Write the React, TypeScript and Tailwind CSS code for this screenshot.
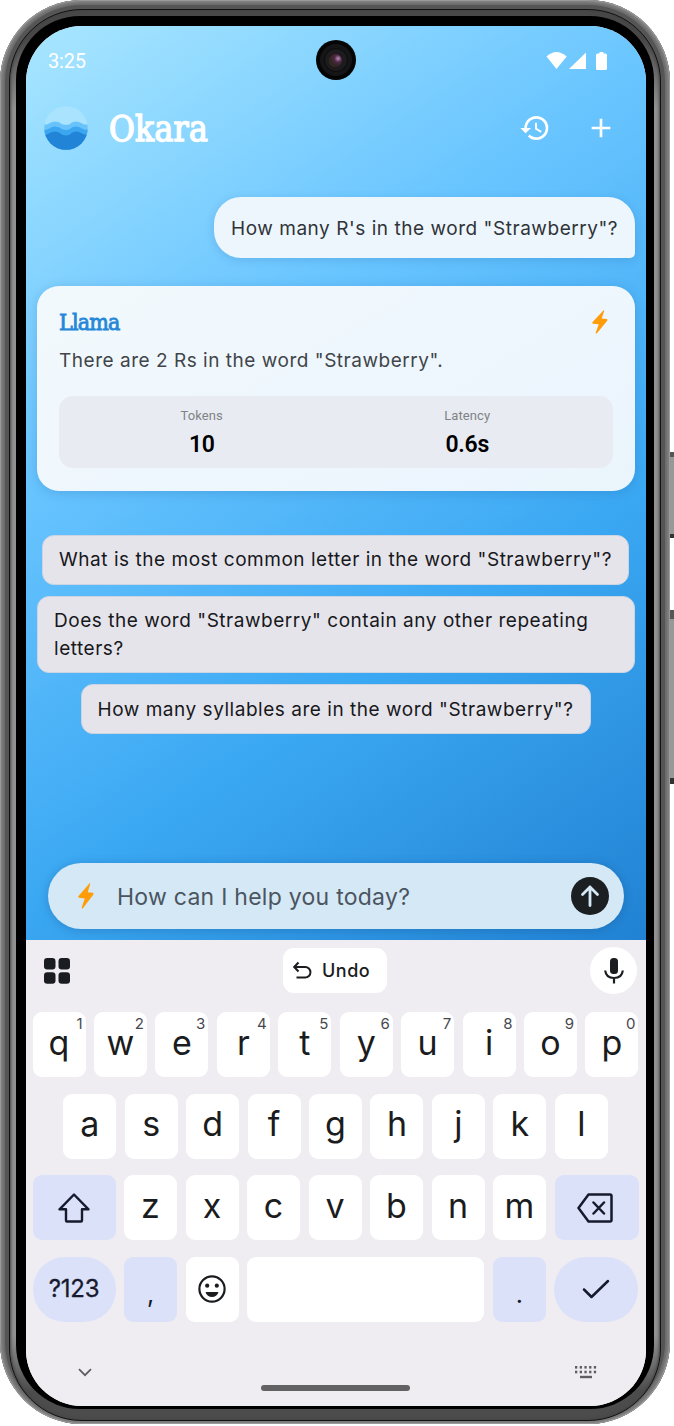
import React from "react";
import { MdHistory, MdAdd } from "react-icons/md";

function Bolt({ className }: { className?: string }) {
  return (
    <svg viewBox="0 0 16 24" className={className} fill="#ff9c07" preserveAspectRatio="none">
      <path d="M11.4.5.4 12.3q-.5 1 .6 1.400l5.800.5L3.700 22.600q0 1.300 1.200.7L15.400 10.600q.4-1.100-.6-1.500L9.700 8.600 12.200.900Q12.200-.1 11.400.5Z" />
    </svg>
  );
}

function Logo() {
  return (
    <svg viewBox="0 0 44 44" className="size-11 shrink-0">
      <defs>
        <clipPath id="logo-disc">
          <circle cx="22" cy="22" r="21.800" />
        </clipPath>
      </defs>
      <g clipPath="url(#logo-disc)">
        <rect width="44" height="44" fill="#a9e3fd" />
        <path d="M0 18C4 20 6 15.500 11 15.500S17 19 22 19 27 15.500 32 15.500 39 20 44 18V44H0Z" fill="#69c3fb" />
        <path d="M0 23.500C4 25 6 20.500 11 20.500S17 24 22 24 27 20.500 32 20.500 39 25 44 23.500V44H0Z" fill="#3ca6f0" />
        <path d="M0 28.500C4 29.500 6 25.500 11 25.500S17 29.500 22 29.500 27 25.500 32 25.500 39 29.500 44 28.500V44H0Z" fill="#2284d7" />
      </g>
    </svg>
  );
}

function StatusBar() {
  return (
    <div className="flex h-[68px] items-center justify-between pl-[22px] pr-[38px] pt-px text-white">
      <span className="font-['Roboto',sans-serif] text-[20px] leading-none tracking-[-0.2px]">3:25</span>
      <svg viewBox="0 0 62 20" className="h-5 w-[62px]" fill="currentColor">
        <path d="M.5 5.500Q10.500-3.500 20.700 5.500L10.500 18Z" />
        <path d="M40 1.500V18H23Z" />
        <path d="M53.500 1h4v1.500h2q1.500 0 1.500 1.500v13.500q0 1.500-1.500 1.500h-8q-1.500 0-1.500-1.500V4q0-1.500 1.500-1.500h2Z" />
      </svg>
    </div>
  );
}

function Camera() {
  return (
    <div className="absolute left-[289.500px] top-[14px] flex size-10 items-center justify-center rounded-full bg-[#050505]">
      <div className="flex size-8 items-center justify-center rounded-full bg-[#151416]">
        <div className="flex size-[24px] items-center justify-center rounded-full border border-[#0b0b0c] bg-[#1d1b1e]">
          <div className="size-[13px] rounded-full bg-[radial-gradient(circle_at_70%_35%,#b98bb5_0%,#4c2745_30%,#2f241b_65%,#584c48_100%)]" />
        </div>
      </div>
    </div>
  );
}

function Header() {
  return (
    <header className="flex h-[68px] items-center pl-[18px] pr-[29px]">
      <Logo />
      <h1 className="ml-[21px] pt-[3px] font-['DejaVu_Serif_Condensed','DejaVu_Serif',serif] text-[35px] leading-none tracking-[0.3px] text-white [-webkit-text-stroke:1.400px_white]">
        Okara
      </h1>
      <MdHistory className="ml-auto size-8 text-white" />
      <MdAdd className="ml-[34px] size-8 text-white" />
    </header>
  );
}

function Stat({ label, value }: { label: string; value: string }) {
  return (
    <div className="flex flex-1 flex-col items-center font-['Roboto',sans-serif]">
      <span className="text-[13px] leading-[15px] tracking-[0.1px] text-[#808386]">{label}</span>
      <span className="mt-[8px] text-[23px] font-semibold leading-[27px] tracking-[-0.3px] text-black">{value}</span>
    </div>
  );
}

function Chat() {
  return (
    <main className="flex flex-col items-center px-[11px] pt-[35px] font-['Inter',sans-serif] text-[19px] leading-[28px]">
      <div className="flex h-[61px] w-[421px] items-center self-end whitespace-nowrap rounded-[27px] rounded-br-[5px] bg-[#eef6fd] pl-[17px] pt-[2px] tracking-[0.540px] text-[#303438] shadow-[0_2px_10px_rgba(20,80,140,0.18)]">
        How many R's in the word "Strawberry"?
      </div>
      <section className="mt-[28px] h-[205px] w-[598px] rounded-[22px] bg-[linear-gradient(150deg,#f1f9fc,#eff7fe_45%,#ecf5fd_85%,#eaf6fb)] px-[22px] pt-[20px] shadow-[0_2px_12px_rgba(20,80,140,0.22)]">
        <div className="flex h-[32px] items-center justify-between pr-[5px]">
          <h2 className="font-['DejaVu_Serif_Condensed','DejaVu_Serif',serif] text-[23px] leading-none tracking-[-0.800px] text-[#2487d8] [-webkit-text-stroke:0.8px_#2487d8]">
            Llama
          </h2>
          <Bolt className="h-6 w-4" />
        </div>
        <p className="mt-[9px] tracking-[0.520px] text-[#414549]">There are 2 Rs in the word "Strawberry".</p>
        <div className="mt-[21px] flex h-[72px] rounded-[14px] bg-[#e8ebf1] pl-[10px] pr-[13px] pt-3">
          <Stat label="Tokens" value="10" />
          <Stat label="Latency" value="0.6s" />
        </div>
      </section>
      <div className="mt-[44px] flex w-full flex-col items-center gap-[11px] tracking-[0.530px] text-[#17181b]">
        <div className="mr-px flex h-[50px] w-[587px] items-center justify-center whitespace-nowrap rounded-[12px] border border-[#ccd4e2] bg-[#e6e4eb]">
          What is the most common letter in the word "Strawberry"?
        </div>
        <div className="flex h-[77px] w-[598px] items-center rounded-[12px] border border-[#ccd4e2] bg-[#e6e4eb] pl-[16px] pr-5">
          Does the word "Strawberry" contain any other repeating letters?
        </div>
        <div className="mr-px flex h-[50px] w-[510px] items-center justify-center whitespace-nowrap rounded-[12px] border border-[#ccd4e2] bg-[#e6e4eb] pt-px">
          How many syllables are in the word "Strawberry"?
        </div>
      </div>
    </main>
  );
}

function Composer() {
  return (
    <div className="mb-[11px] ml-[22px] mr-[22px] mt-auto flex h-[66px] items-center rounded-full bg-[#d5e8f6] pl-[30px] pr-[15px] shadow-[0_1px_10px_rgba(10,50,100,0.25)]">
      <Bolt className="h-[26px] w-4" />
      <span className="ml-[23px] pt-[2px] font-['Inter',sans-serif] text-[23px] leading-none tracking-[0.260px] text-[#4b5560]">How can I help you today?</span>
      <div className="ml-auto flex size-[38px] items-center justify-center rounded-full bg-[#1b1f22] text-[#d5e8f6]">
        <svg viewBox="0 0 24 24" className="size-6" fill="none" stroke="currentColor" strokeWidth="2.800" strokeLinecap="round" strokeLinejoin="round">
          <path d="M12 21.500V3M4.500 10.500 12 3l7.500 7.500" />
        </svg>
      </div>
    </div>
  );
}

function Key({ label, hint, tinted }: { label: string; hint?: string; tinted?: boolean }) {
  return (
    <div
      className={
        tinted
          ? "relative flex h-[65px] w-[53px] items-end justify-center rounded-[9px] bg-[#dce1fa] pb-[14px] text-[25px] leading-[28px] text-[#161a2c]"
          : "relative flex h-[65px] w-[53px] items-center justify-center rounded-[9px] bg-white pb-1 text-[34px] leading-none text-[#1b1c20]"
      }
    >
      {label}
      {hint && <span className="absolute right-[3px] top-[4px] text-[15px] leading-[16px] text-[#46484f]">{hint}</span>}
    </div>
  );
}

const topRow = [..."qwertyuiop"];
const hints = [..."1234567890"];
const homeRow = [..."asdfghjkl"];
const bottomRow = [..."zxcvbnm"];

function Keyboard() {
  return (
    <div className="flex h-[466px] shrink-0 flex-col bg-[#efedf2] pl-[6.500px] pr-[7.500px] font-['Inter',sans-serif]">
      <div className="flex h-[61px] items-center justify-between pl-[11.500px] pr-[1.500px]">
        <svg viewBox="0 0 26 26" className="size-[26px]" fill="#1b1c21">
          <rect width="11.500" height="11.500" rx="3.200" />
          <rect x="14.500" width="11.500" height="11.500" rx="3.200" />
          <rect y="14.300" width="11.500" height="11.500" rx="3.200" />
          <rect x="14.500" y="14.300" width="11.500" height="11.500" rx="3.200" />
        </svg>
        <div className="ml-[10px] flex h-[45px] w-[104px] items-center rounded-[11px] bg-white pl-[9px] text-[#1b1c20]">
          <svg viewBox="0 0 20 20" className="size-5 shrink-0" fill="none" stroke="currentColor" strokeWidth="2">
            <path d="M6.500 1.500 2.200 6l4.300 4.500M2.700 6h10.500a5.200 5.200 0 0 1 0 10.500H4.500" />
          </svg>
          <span className="ml-[10px] text-[18px] font-medium leading-none tracking-[0.5px]">Undo</span>
        </div>
        <div className="flex size-[47px] items-center justify-center rounded-full bg-white">
          <svg viewBox="0 0 22 28" className="h-7 w-[22px]" fill="none" stroke="#1b1c20" strokeWidth="2.200">
            <rect x="7" y="1" width="8" height="16" rx="3.500" fill="#1b1c20" stroke="none" />
            <path d="M2.200 13.500c.5 5 4 7.500 8.800 7.500s8.300-2.500 8.800-7.500M11 21v5.500" />
          </svg>
        </div>
      </div>
      <div className="mt-[11px] flex justify-between">
        {topRow.map((k, i) => (
          <Key key={k} label={k} hint={hints[i]} />
        ))}
      </div>
      <div className="mt-[16.500px] flex justify-between px-[30.700px]">
        {homeRow.map((k) => (
          <Key key={k} label={k} />
        ))}
      </div>
      <div className="mt-[16.500px] flex justify-between">
        <div className="flex h-[65px] w-[83px] items-center justify-center rounded-[9px] bg-[#dce1fa]">
          <svg viewBox="0 0 32 30" className="h-[30px] w-8" fill="none" stroke="#161a2c" strokeWidth="2.400" strokeLinejoin="round">
            <path d="M16 1.500 1.500 16.300H8v11.200q0 1 1 1h14q1 0 1-1V16.300h6.500Z" />
          </svg>
        </div>
        {bottomRow.map((k) => (
          <Key key={k} label={k} />
        ))}
        <div className="flex h-[65px] w-[84px] items-center justify-center rounded-[9px] bg-[#dce1fa] pr-1">
          <svg viewBox="0 0 36 30" className="h-[30px] w-9" fill="none" stroke="#161a2c" strokeWidth="2.500" strokeLinejoin="round" strokeLinecap="round">
            <path d="M11.500 1.500h21.500q1.500 0 1.500 1.500v24q0 1.500-1.500 1.500H11.500L1.500 15ZM16.500 9.500 27 20.500M27 9.500 16.500 20.500" />
          </svg>
        </div>
      </div>
      <div className="mt-[16.500px] flex justify-between">
        <div className="flex h-[65px] w-[83px] items-center justify-center rounded-[32px] bg-[#dce1fa] text-[24px] tracking-[-0.200px] text-[#161a2c] [-webkit-text-stroke:0.3px_#161a2c]">?123</div>
        <Key label="," tinted />
        <div className="flex h-[65px] w-[53px] items-center justify-center rounded-[9px] bg-white">
          <svg viewBox="0 0 28 28" className="size-7" fill="#1b1c20">
            <circle cx="14" cy="14" r="12.600" fill="none" stroke="#1b1c20" strokeWidth="2.200" />
            <circle cx="9.200" cy="10.700" r="2.100" />
            <circle cx="18.800" cy="10.700" r="2.100" />
            <path d="M7.500 17h13c-1 3.200-3.500 5-6.500 5s-5.500-1.800-6.500-5Z" />
          </svg>
        </div>
        <div className="h-[65px] w-[237px] rounded-[9px] bg-white" />
        <Key label="." tinted />
        <div className="flex h-[65px] w-[84px] items-center justify-center rounded-[32px] bg-[#dce1fa]">
          <svg viewBox="0 0 28 20" className="h-5 w-7" fill="none" stroke="#161a2c" strokeWidth="2.500" strokeLinecap="round" strokeLinejoin="round">
            <path d="m2 10.500 7.500 7.500L26 2" />
          </svg>
        </div>
      </div>
      <div className="mt-[39px] flex items-start justify-between pl-[45.500px] pr-[41.500px]">
        <svg viewBox="0 0 14 9" className="mt-[7px] h-[9px] w-[14px]" fill="none" stroke="#5e5e62" strokeWidth="1.800">
          <path d="m1 1.200 6 6 6-6" />
        </svg>
        <div className="ml-[4px] mt-[24px] h-[6px] w-[149px] rounded-full bg-[#626164]" />
        <svg viewBox="0 0 22 13" className="mt-[5px] h-[13px] w-[22px]" fill="#5e5e62">
          {[0, 4.7, 9.4, 14.1, 18.8].map((x) => (
            <React.Fragment key={x}>
              <rect x={x} y="0" width="2.300" height="2.600" />
              <rect x={x} y="4.700" width="2.300" height="2.600" />
            </React.Fragment>
          ))}
          <rect x="5" y="9.800" width="12" height="2.400" />
        </svg>
      </div>
    </div>
  );
}

export default function App() {
  return (
    <div className="relative h-[1426px] w-[674px] overflow-hidden bg-white">
      <div className="absolute left-[669px] top-[452px] h-[86px] w-[8px] border-b-4 border-t-[5px] border-b-[#333] border-t-[#555] bg-[#989898]" />
      <div className="absolute left-[669px] top-[610px] h-[174px] w-[8px] border-b-[6px] border-t-[9px] border-b-[#333] border-t-[#555] bg-[#989898]" />
      <div className="relative h-[1424px] w-[670px] rounded-[82px] bg-[#555] p-[9px] pb-[3px] shadow-[inset_0_0_0_1px_#9a9a9a,inset_0_0_2px_3px_#808080,inset_0_0_0_5px_#6b6b6b]">
        <div className="h-full w-full rounded-[73px] border border-[#111] bg-[linear-gradient(#484848,#484848_2%,#929292_7%,#929292_94%,#4c4c4c_98%)] px-[6px] pb-[11px] pt-[6px] shadow-[inset_0_0_3px_1px_#444]">
          <div className="h-full w-full rounded-[64px] bg-black pb-[3px] pl-[10px] pr-[8px] pt-[10px]">
            <div className="relative flex h-full w-full flex-col overflow-hidden rounded-[56px] bg-[#efedf2]">
              <div className="flex h-[914px] w-full shrink-0 flex-col bg-[linear-gradient(145.850deg,#a9e6ff_0%,#6bc6ff_33%,#3ba8f3_66%,#2182d3_100%)]">
                <StatusBar />
                <Header />
                <Chat />
                <Composer />
              </div>
              <Keyboard />
              <Camera />
            </div>
          </div>
        </div>
      </div>
    </div>
  );
}
